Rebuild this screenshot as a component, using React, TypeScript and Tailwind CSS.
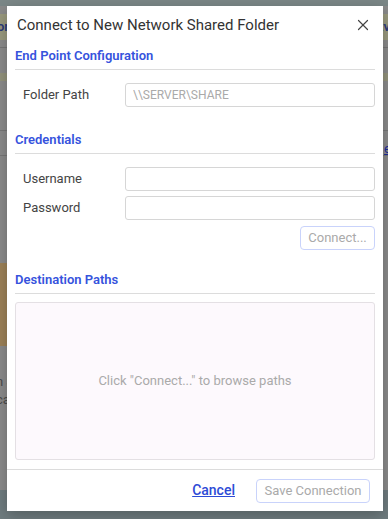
import { X } from 'lucide-react';

function Background() {
  return (
    <div className="absolute inset-0 flex flex-col bg-[#8b8b8b]">
      <div className="h-[6px] bg-[#7b8787]"></div>
      <div className="h-[8px]"></div>
      <div className="h-[26px] bg-[#9a9a7e] flex items-center justify-between text-[13px] font-semibold text-[#2c3a7a]">
        <span className="-ml-[3px]">or</span>
        <span className="-mr-[2px]">tv</span>
      </div>
      <div className="h-[7px]"></div>
      <div className="h-[1px] bg-[#767676]"></div>
      <div className="h-[25px]"></div>
      <div className="h-[8px] bg-[#93937c]"></div>
      <div className="h-[49px]"></div>
      <div className="h-[1px] bg-[#777]"></div>
      <div className="h-[24px] flex justify-end items-end">
        <span className="text-[13px] leading-none text-[#1c2a9a] underline -mr-[3px]">e</span>
      </div>
      <div className="h-[1px] bg-[#777]"></div>
      <div className="h-[107px]"></div>
      <div className="h-[83px] flex">
        <div className="w-[20px] bg-[#9d8258]"></div>
      </div>
      <div className="h-[27px]"></div>
      <div className="flex flex-col text-[13px] leading-[18px] text-[#4a4a4a] -ml-[4px]">
        <span>n S</span>
        <span>ca</span>
      </div>
      <div className="flex-1"></div>
      <div className="h-[29px] bg-[#6f7c7f]"></div>
    </div>
  );
}

function SectionHeading({ title, className }: { title: string; className?: string }) {
  return (
    <div className={`border-b border-[#dcdcdc] pb-[4px] ${className ?? ''}`}>
      <h3 className="text-[13px] leading-[18px] font-semibold text-[#3653dd]">{title}</h3>
    </div>
  );
}

function FieldRow({ label, placeholder, className }: { label: string; placeholder?: string; className?: string }) {
  return (
    <div className={`flex items-center ${className ?? ''}`}>
      <label className="w-[110px] pl-[8px] text-[13px] text-[#444]">{label}</label>
      <input
        className="flex-1 h-[24px] border border-[#d6d6d6] rounded-[3px] px-[7px] text-[12px] text-[#333] placeholder:text-[#aaa] outline-none"
        placeholder={placeholder}
      />
    </div>
  );
}

export default function App() {
  return (
    <div className="relative w-[388px] h-[519px] overflow-hidden" style={{ fontFamily: 'Roboto, "Liberation Sans", sans-serif' }}>
      <Background />

      {/* Modal */}
      <div className="absolute left-[7px] top-[6px] w-[376px] h-[505px] bg-white shadow-[0_4px_14px_rgba(0,0,0,0.25)] flex flex-col">
        {/* Header */}
        <div className="h-[29px] flex items-end justify-between pl-[10px] pr-[11px]">
          <h2 className="text-[15px] leading-[20px] text-[#333]">Connect to New Network Shared Folder</h2>
          <X className="w-[18px] h-[18px] text-[#444] mb-[1px]" strokeWidth={1.6} />
        </div>

        <div className="px-[8px] flex flex-col flex-1">
          <SectionHeading title="End Point Configuration" className="mt-[12px]" />
          <FieldRow label="Folder Path" placeholder="\\SERVER\SHARE" className="mt-[13px]" />

          <SectionHeading title="Credentials" className="mt-[24px]" />
          <FieldRow label="Username" className="mt-[13px]" />
          <FieldRow label="Password" className="mt-[5px]" />
          <div className="flex justify-end mt-[6px]">
            <button className="h-[24px] w-[75px] border border-[#c9d3fb] rounded-[4px] text-[13px] text-[#aaa]">
              Connect...
            </button>
          </div>

          <SectionHeading title="Destination Paths" className="mt-[21px]" />
          <div className="mt-[8px] h-[158px] bg-[#fdf9fd] border border-[#e4e0e4] rounded-[3px] flex items-center justify-center">
            <span className="text-[13px] text-[#aaa]">Click "Connect..." to browse paths</span>
          </div>
        </div>

        {/* Footer */}
        <div className="h-[42px] border-t border-[#dcdcdc] flex items-center justify-end gap-[21px] pr-[13px]">
          <a className="text-[14px] font-medium text-[#2d4bd6] underline">Cancel</a>
          <button className="h-[24px] w-[114px] border border-[#c9d3fb] rounded-[4px] text-[13px] text-[#aaa]">
            Save Connection
          </button>
        </div>
      </div>
    </div>
  );
}
